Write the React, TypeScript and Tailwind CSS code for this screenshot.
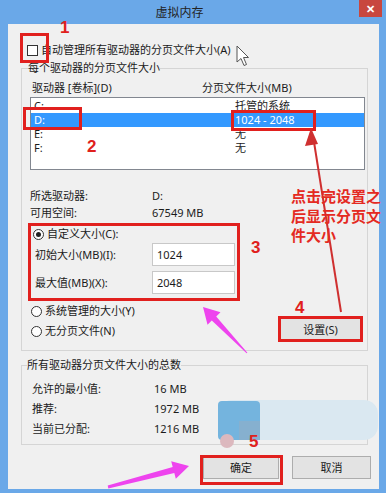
const cjk = "font-['Noto_Sans','Noto_Sans_CJK_SC',sans-serif]";

function Radio({ checked }: { checked?: boolean }) {
  return (
    <span className="flex h-[11px] w-[11px] items-center justify-center rounded-full border border-[#333] bg-white">
      {checked && <span className="h-[5px] w-[5px] rounded-full bg-[#222]" />}
    </span>
  );
}

function Btn({ label, w }: { label: string; w: string }) {
  return (
    <div className={`${w} flex h-[23px] items-center justify-center border border-[#adadad] bg-[#e3e3e3]`}>{label}</div>
  );
}

const drives = [
  { d: "C:", s: "托管的系统" },
  { d: "D:", s: "1024 - 2048", sel: true },
  { d: "E:", s: "无" },
  { d: "F:", s: "无" },
];

export default function App() {
  return (
    <div className={`relative flex h-[493px] w-[386px] flex-col overflow-hidden bg-[#6aa8e8] text-[11px] leading-[14px] text-[#1b1b1b] ${cjk}`}>
      {/* title bar */}
      <div className="flex h-[24px] items-start">
        <div className="flex-1 pt-[6px] text-center text-[12px] text-[#222]">虚拟内存</div>
        <div className="mr-[4px] flex h-[17px] w-[23px] items-center justify-center bg-[#c8473f] text-[11px] font-bold leading-none text-white">✕</div>
      </div>

      {/* client */}
      <div className="mb-[4px] ml-[8px] mr-[7px] flex flex-1 flex-col bg-[#f0f0f0]">
        <div className="ml-[19px] mt-[19px] flex items-center">
          <span className="h-[11px] w-[11px] border border-[#333] bg-white" />
          <span className="ml-[3px]">自动管理所有驱动器的分页文件大小(A)</span>
        </div>

        <fieldset className="ml-[13px] mr-[11px] mt-[4px] border border-[#d5d5d5] pb-[9px] pl-[6px]">
          <legend className="px-0">每个驱动器的分页文件大小</legend>
          <div className="ml-[4px] mt-[6px] grid grid-cols-[170px_1fr]">
            <span>驱动器 [卷标](D)</span>
            <span>分页文件大小(MB)</span>
          </div>
          <div className="ml-[2px] mr-[2px] mt-[2px] h-[73px] border border-[#828790] bg-white pt-[1px]">
            {drives.map((r) => (
              <div
                key={r.d}
                className={`grid h-[14px] grid-cols-[201px_1fr] pl-[3px] ${r.sel ? "bg-[#3399ff] text-white" : ""}`}
              >
                <span>{r.d}</span>
                <span>{r.s}</span>
              </div>
            ))}
          </div>

          <div className="ml-[2px] mt-[19px] grid grid-cols-[122px_1fr] gap-y-[3px]">
            <span>所选驱动器:</span>
            <span>D:</span>
            <span>可用空间:</span>
            <span>67549 MB</span>
          </div>

          <div className="ml-[5px] mt-[7px] flex items-center gap-[3px]">
            <Radio checked />
            <span>自定义大小(C):</span>
          </div>
          <div className="ml-[7px] mt-[2px] flex items-center">
            <span className="w-[117px]">初始大小(MB)(I):</span>
            <div className="flex h-[23px] w-[83px] items-center border border-[#c8c8c8] bg-white pl-[4px]">1024</div>
          </div>
          <div className="ml-[7px] mt-[5px] flex items-center">
            <span className="w-[117px]">最大值(MB)(X):</span>
            <div className="flex h-[23px] w-[83px] items-center border border-[#c8c8c8] bg-white pl-[4px]">2048</div>
          </div>

          <div className="mt-[10px] flex items-start justify-between">
            <div className="ml-[3px] flex flex-col gap-[6px]">
              <div className="flex items-center gap-[3px]">
                <Radio />
                <span>系统管理的大小(Y)</span>
              </div>
              <div className="flex items-center gap-[3px]">
                <Radio />
                <span>无分页文件(N)</span>
              </div>
            </div>
            <div className="mr-[6px] mt-[14px]">
              <Btn label="设置(S)" w="w-[81px]" />
            </div>
          </div>
        </fieldset>

        <fieldset className="ml-[13px] mr-[11px] mt-[7px] border border-[#d5d5d5] pb-[8px] pl-[5px]">
          <legend className="px-0">所有驱动器分页文件大小的总数</legend>
          <div className="ml-[5px] mt-[10px] grid grid-cols-[122px_1fr] gap-y-[6px]">
            <span>允许的最小值:</span>
            <span>16 MB</span>
            <span>推荐:</span>
            <span>1972 MB</span>
            <span>当前已分配:</span>
            <span>1216 MB</span>
          </div>
        </fieldset>

        <div className="mr-[8px] mt-[11px] flex justify-end gap-[13px]">
          <Btn label="确定" w="w-[76px]" />
          <Btn label="取消" w="w-[79px]" />
        </div>
      </div>

      {/* annotations */}
      <svg className="pointer-events-none absolute left-0 top-0" width="386" height="493" viewBox="0 0 386 493">
        <rect x="218" y="400" width="160" height="40" rx="14" fill="#dae8f1" />
        <rect x="218" y="401" width="42" height="39" rx="4" fill="#74b4de" />
        <rect x="239" y="421" width="21" height="19" fill="#86b0cf" />
        <circle cx="227" cy="441" r="7" fill="#dcb8be" />

        <g fill="none" stroke="#e1201e" strokeWidth="3">
          <rect x="21.5" y="34.5" width="26" height="27" />
          <rect x="24.5" y="108.5" width="56" height="20" />
          <rect x="232.5" y="111.5" width="82" height="18" />
          <rect x="29.5" y="224.5" width="209" height="75" />
          <rect x="279.5" y="317.5" width="82" height="23" />
          <rect x="201.5" y="456.5" width="80" height="27" />
        </g>

        <line x1="341" y1="312" x2="314" y2="142" stroke="#cf3030" strokeWidth="2" />
        <polygon points="311,128 305,146 318,144" fill="#cf3030" />

        <polygon
          points="247.4,352.7 216.2,316.4 220.5,312.3 203,307 207.5,324.7 211.8,320.6 246.6,353.3"
          fill="#ee44ee"
        />
        <polygon
          points="108.3,488.5 174.3,472.9 175.8,478.7 189,466 171.2,461.3 172.7,467.1 107.7,485.5"
          fill="#ee44ee"
        />

        <path
          d="M237 46 L237 62 L241 58.5 L244 65.5 L246.5 64.5 L243.5 57.5 L248.5 57.5 Z"
          fill="#fff"
          stroke="#555"
          strokeWidth="1"
        />
      </svg>

      <div className="absolute left-[60px] top-[19px] font-['Liberation_Sans',sans-serif] text-[17px] font-bold leading-none text-[#e0201c]">1</div>
      <div className="absolute left-[87px] top-[138px] font-['Liberation_Sans',sans-serif] text-[17px] font-bold leading-none text-[#e0201c]">2</div>
      <div className="absolute left-[251px] top-[239px] font-['Liberation_Sans',sans-serif] text-[17px] font-bold leading-none text-[#e0201c]">3</div>
      <div className="absolute left-[295px] top-[299px] font-['Liberation_Sans',sans-serif] text-[17px] font-bold leading-none text-[#e0201c]">4</div>
      <div className="absolute left-[249px] top-[433px] font-['Liberation_Sans',sans-serif] text-[17px] font-bold leading-none text-[#e0201c]">5</div>

      <div className="absolute left-[291px] top-[186px] w-[95px] font-['Noto_Sans_CJK_SC',sans-serif] text-[15px] font-bold leading-[19.5px] text-[#e42a22]">
        点击完设置之
        <br />
        后显示分页文
        <br />
        件大小
      </div>
    </div>
  );
}
